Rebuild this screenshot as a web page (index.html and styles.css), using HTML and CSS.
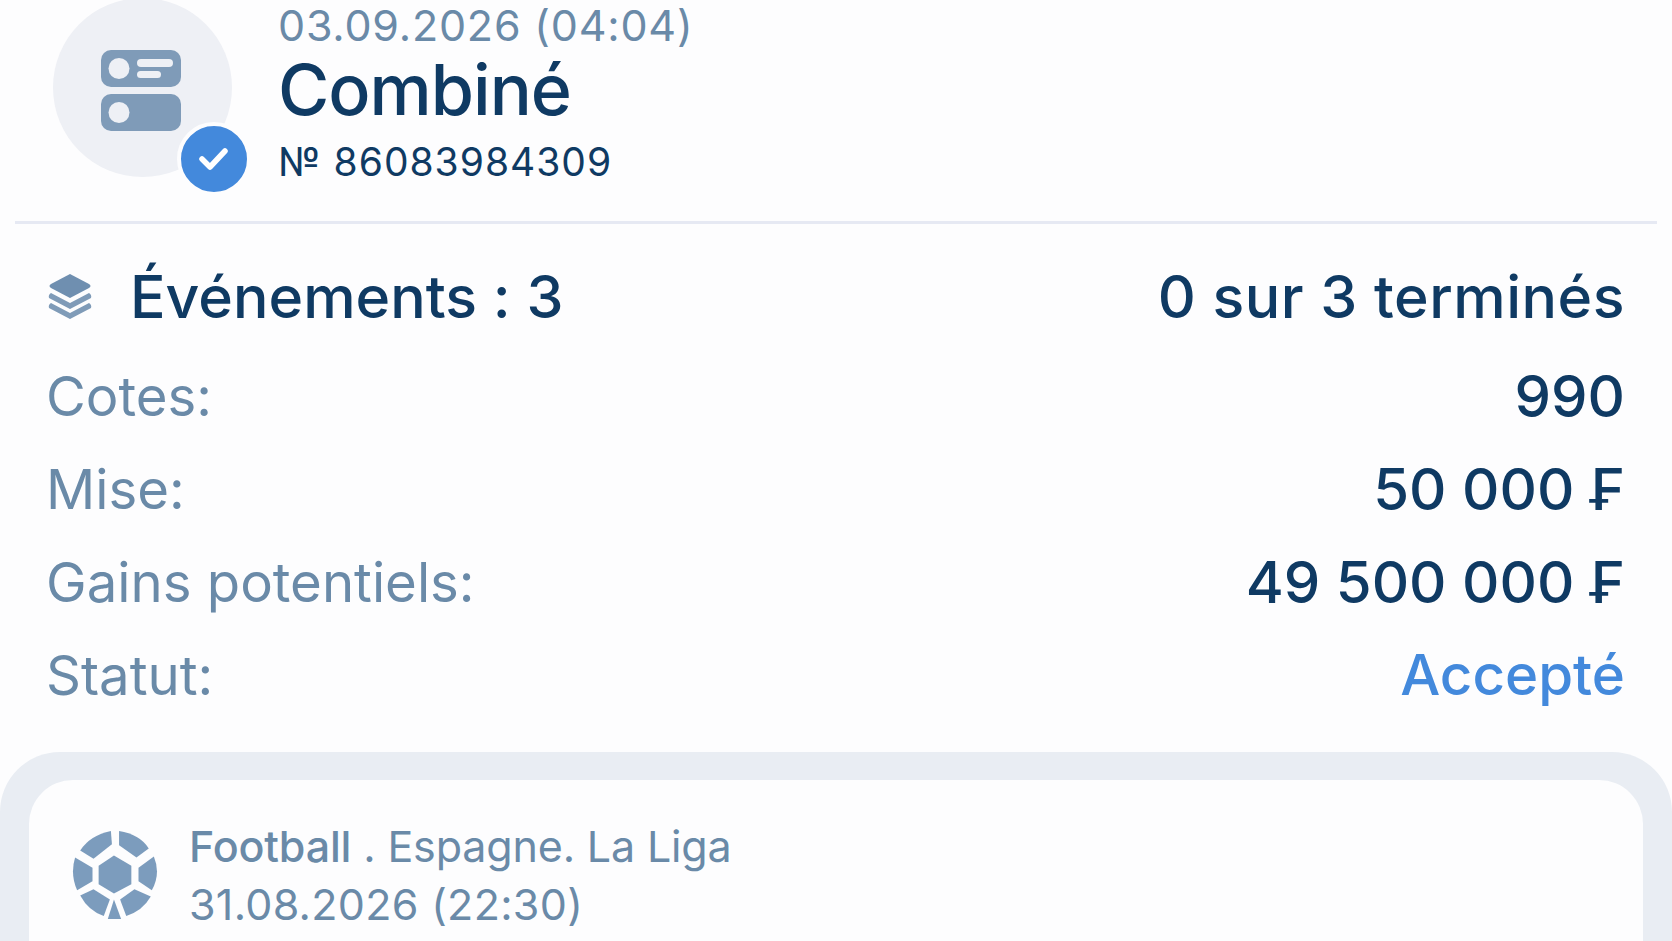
FILE: index.html
```html
<!DOCTYPE html>
<html lang="fr">
<head>
    <meta charset="UTF-8">
    <title>Combiné</title>
    <link rel="stylesheet" href="styles.css">
</head>
<body>
<div class="page">
    <div class="head">
        <div class="avatar">
            <svg class="avatar-icon" width="80" height="82" viewBox="0 0 80 82">
                <rect x="0" y="0" width="80" height="37" rx="10" fill="#7f9bb8"/>
                <circle cx="18" cy="18.500" r="10.500" fill="#eef0f5"/>
                <rect x="36" y="9" width="36" height="8" rx="4" fill="#eef0f5"/>
                <rect x="36" y="21" width="24" height="7" rx="3.500" fill="#eef0f5"/>
                <rect x="0" y="44" width="80" height="37" rx="10" fill="#7f9bb8"/>
                <circle cx="18" cy="62.500" r="10.500" fill="#eef0f5"/>
            </svg>
            <div class="badge">
                <svg width="36" height="30" viewBox="0 0 36 30">
                    <path d="M6 15l8 8L29 7" fill="none" stroke="#fff" stroke-width="5.500" stroke-linecap="round" stroke-linejoin="round"/>
                </svg>
            </div>
        </div>
        <div class="head-text">
            <div class="date">03.09.2026 (04:04)</div>
            <div class="title">Combiné</div>
            <div class="number">№ 86083984309</div>
        </div>
    </div>
    <div class="divider"></div>

    <div class="events">
        <div class="events-left">
            <svg width="44" height="46" viewBox="0 0 44 46">
                <path d="M22 1L41 11Q44 13 41 15L22 25L3 15Q0 13 3 11Z" fill="#6f8fb0"/>
                <path d="M3 20L22 30L41 20Q44 22 43 25L22 36L1 25Q0 22 3 20Z" fill="#7f9bb8"/>
                <path d="M3 30L22 40L41 30Q44 32 43 35L22 46L1 35Q0 32 3 30Z" fill="#7f9bb8"/>
            </svg>
            <span>Événements : 3</span>
        </div>
        <div class="events-done">0 sur 3 terminés</div>
    </div>

    <div class="row"><span class="label">Cotes:</span><span class="value">990</span></div>
    <div class="row"><span class="label">Mise:</span><span class="value">50 000 ₣</span></div>
    <div class="row"><span class="label">Gains potentiels:</span><span class="value">49 500 000 ₣</span></div>
    <div class="row"><span class="label">Statut:</span><span class="value accepted">Accepté</span></div>

    <div class="card-wrap">
        <div class="card">
            <svg class="ball" width="87" height="90" viewBox="0 0 85 88">
                <path d="M38 1L39 14L21 28L8 20Q18 5 38 1Z" fill="#7c9cbd"/>
                <path d="M46 1Q66 4 75 18L63 27L46 15Z" fill="#7c9cbd"/>
                <path d="M41 25L58 35V53L41 62L26 53V35Z" fill="#7c9cbd"/>
                <path d="M3 27L20 37V50L5 59Q-2 43 3 27Z" fill="#7c9cbd"/>
                <path d="M80 26Q87 43 78 59L65 50V37Z" fill="#7c9cbd"/>
                <path d="M8 64L21 58L37 68L31 84Q16 79 8 64Z" fill="#7c9cbd"/>
                <path d="M77 65Q69 79 53 84L47 68L61 58Z" fill="#7c9cbd"/>
                <path d="M41 68L48 87H35Z" fill="#7c9cbd"/>
            </svg>
            <div class="match">
                <div class="league"><span class="sport">Football</span> . Espagne. La Liga</div>
                <div>31.08.2026 (22:30)</div>
            </div>
        </div>
    </div>
</div>
</body>
</html>
```

FILE: styles.css
```css
* {
    margin: 0;
    padding: 0;
    box-sizing: border-box;
}

html, body {
    height: 100%;
    overflow: hidden;
    background: #fdfdfe;
}

.page {
    height: 941px;
    overflow: hidden;
    font-family: Inter, "Liberation Sans", sans-serif;
    font-feature-settings: "calt" 0;
    color: #0f3a63;
}

.head {
    display: flex;
    height: 221px;
    padding-left: 53px;
}

.avatar {
    position: relative;
    flex: none;
    width: 179px;
    height: 179px;
    margin-top: -2px;
    border-radius: 50%;
    background: #eef0f5;
    display: flex;
    justify-content: center;
    padding: 52px 3px 0 0;
}

.badge {
    position: absolute;
    left: 124px;
    top: 124px;
    width: 74px;
    height: 74px;
    border-radius: 50%;
    background: #4389dc;
    border: 4px solid #fdfdfe;
    display: flex;
    align-items: center;
    justify-content: center;
}

.head-text {
    margin-left: 46px;
}

.date {
    font-size: 43px;
    line-height: 50px;
    margin-bottom: -2px;
    letter-spacing: 0.8px;
    color: #6a8aa8;
}

.title {
    font-size: 70px;
    line-height: 84px;
    font-weight: 500;
    letter-spacing: -1px;
}

.number {
    font-size: 39px;
    line-height: 46px;
    margin-top: 7px;
    letter-spacing: 1px;
}

.divider {
    height: 3px;
    margin: 0 15px;
    background: #e6e9f3;
}

.events {
    display: flex;
    justify-content: space-between;
    align-items: center;
    height: 101px;
    margin-top: 24px;
    padding: 0 47px 5px 48px;
    font-size: 59px;
    font-weight: 500;
}

.events-left {
    display: flex;
    align-items: center;
    gap: 38px;
}

.events-done {
    letter-spacing: 0.5px;
}

.row {
    display: flex;
    justify-content: space-between;
    align-items: center;
    height: 93px;
    padding: 0 47px 0 46px;
}

.label {
    font-size: 54.5px;
    color: #6a8aa8;
}

.value {
    font-size: 58px;
    font-weight: 500;
}

.value.accepted {
    font-size: 56.500px;
    color: #4389dc;
}

.card-wrap {
    margin-top: 31px;
    height: 260px;
    padding: 28px 29px 0 29px;
    background: #e9edf3;
    border-radius: 60px 60px 0 0;
}

.card {
    display: flex;
    height: 100%;
    padding: 50px 0 0 43px;
    background: #fdfdfe;
    border-radius: 44px 44px 0 0;
}

.ball {
    flex: none;
}

.match {
    margin-left: 30px;
    margin-top: -13px;
    font-size: 43px;
    line-height: 58px;
    letter-spacing: 0.3px;
    color: #6a8aa8;
}

.league {
    letter-spacing: -0.15px;
}

.sport {
    font-weight: 500;
}
```
